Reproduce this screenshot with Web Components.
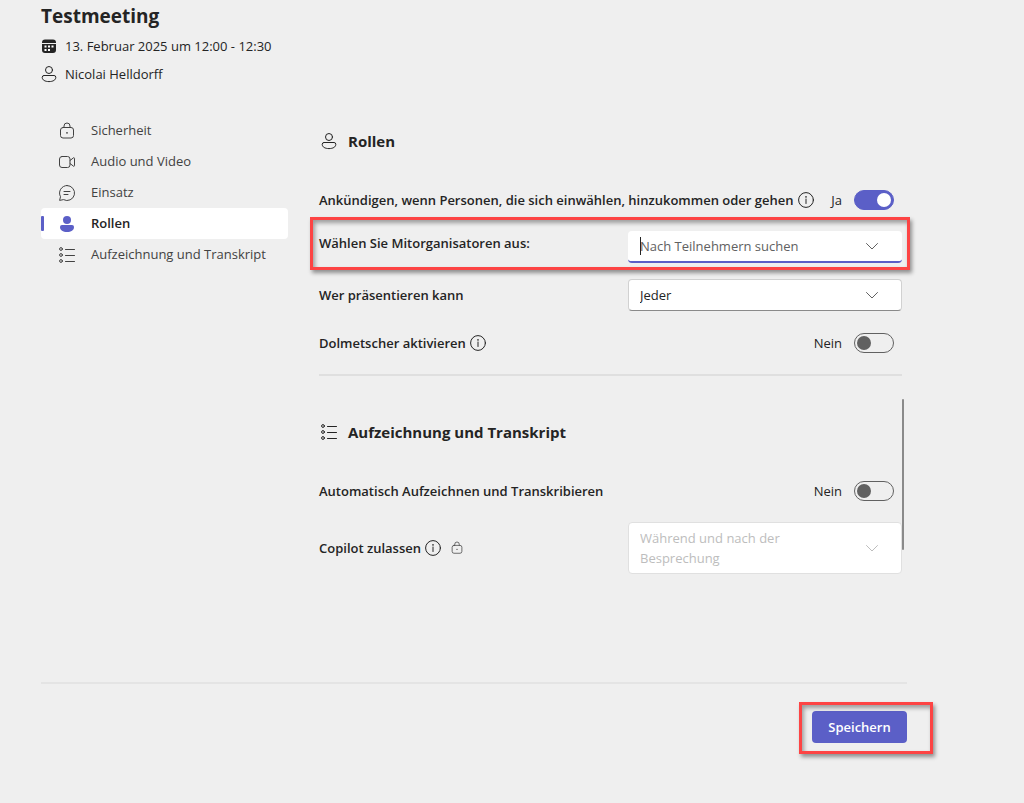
<!DOCTYPE html>
<html lang="de">
<head>
<meta charset="utf-8">
<meta name="viewport" content="width=device-width, initial-scale=1">
<title>Testmeeting – Besprechungsoptionen</title>
<style>
  body {
    margin: 0;
    background: #efefef;
    color: #242424;
    font: 13px/20px "Open Sans", "Noto Sans", sans-serif;
  }
</style>
</head>
<body>
<meeting-options></meeting-options>

<script>
const ICONS = {
  calendar: '<path fill="currentColor" d="M1 4.5A3 3 0 0 1 4 1.5h8a3 3 0 0 1 3 3V5H1zM1 6h14v6a3 3 0 0 1-3 3H4a3 3 0 0 1-3-3z"/><g fill="#fff"><rect x="7" y="7.500" width="2" height="2"/><rect x="10.500" y="7.500" width="2" height="2"/><rect x="3.500" y="11" width="2" height="2"/><rect x="7" y="11" width="2" height="2"/><rect x="3.500" y="7.500" width="2" height="2"/></g>',
  person: '<circle cx="8" cy="4" r="3.500"/><path d="M3 9.500h10a1.800 1.800 0 0 1 1.800 1.800C14.800 14 12 15.600 8 15.600S1.200 14 1.200 11.300A1.800 1.800 0 0 1 3 9.500z"/>',
  personFilled: '<g fill="currentColor" stroke="none"><circle cx="8" cy="4" r="4"/><path d="M3 9h10a2 2 0 0 1 2 2c0 3.200-3 5-7 5s-7-1.800-7-5a2 2 0 0 1 2-2z"/></g>',
  lock: '<rect x="1.500" y="4.500" width="13" height="10.500" rx="2.500"/><path d="M5 4.500V3a3 3 0 0 1 6 0v1.500"/><circle cx="8" cy="9.800" r=".9" fill="currentColor" stroke="none"/>',
  video: '<rect x=".5" y="2.500" width="10.500" height="11" rx="2.500"/><path d="M11 6.500l3.500-2.700c.4-.3 1 0 1 .5v7.400c0 .5-.6.8-1 .5L11 9.500"/>',
  chat: '<path d="M8 .5a7.500 7.500 0 1 1-3.500 14.100L.6 15.400l.9-3.700A7.500 7.500 0 0 1 8 .5zM5 6.500h6M5 9.500h4"/>',
  list: '<circle cx="2" cy="2" r="1.400"/><circle cx="2" cy="8" r="1.400"/><circle cx="2" cy="14" r="1.400"/><path d="M6.500 2.500h9M6.500 8.500h9M6.500 14.500h9"/>',
  info: '<circle cx="8" cy="8" r="7.400"/><path d="M8 7v4.500"/><circle cx="8" cy="4.900" r=".8" fill="currentColor" stroke="none"/>',
  chevron: '<path d="M2.500 5.500L8 11l5.500-5.500"/>'
};

function define(name, render) {
  customElements.define(name, class extends HTMLElement {
    connectedCallback() {
      if (this.shadowRoot) return;
      const template = document.createElement('template');
      template.innerHTML = render(this);
      this.attachShadow({ mode: 'open' }).append(template.content.cloneNode(true));
    }
  });
}

/* Label column shared by all kinds of setting */
const settingStyle = `
  :host { display: flex; align-items: center; gap: 12px; min-height: 31px; }
  .caption { flex: 1; display: flex; align-items: center; gap: 4px; }
  .caption ui-icon[name=lock] { --size: 12px; margin-left: 6px; color: #424242; }
  label { font-weight: 600; line-height: 24px; }
`;
const caption = el => `
  <div class="caption">
    <label for="control">${el.getAttribute('label')}</label>
    ${el.hasAttribute('info') ? '<ui-icon name="info"></ui-icon>' : ''}
    ${el.hasAttribute('locked') ? '<ui-icon name="lock"></ui-icon>' : ''}
  </div>`;

define('ui-icon', el => `
  <style>
    :host { display: block; flex: none; width: var(--size, 16px); height: var(--size, 16px); }
    svg { display: block; width: 100%; height: 100%; overflow: visible; }
  </style>
  <svg viewBox="0 0 16 16" fill="none" stroke="${el.getAttribute('name') === 'calendar' ? 'none' : 'currentColor'}" stroke-linecap="round" stroke-linejoin="round" aria-hidden="true">${ICONS[el.getAttribute('name')]}</svg>`);

define('marked-area', () => `
  <style>
    :host { display: block; position: relative; }
    :host::after {
      content: ""; position: absolute; inset: var(--reach); pointer-events: none;
      border: 3px solid #fd4444;
      box-shadow: 2px 3px 4px rgba(0,0,0,.4), inset 2px 3px 4px rgba(0,0,0,.35);
    }
  </style>
  <slot></slot>`);

define('meeting-header', () => `
  <style>
    :host { display: block; }
    h1 { margin: 0; font-size: 19px; line-height: 32px; font-weight: 700; }
    ul { list-style: none; margin: 0; padding: 0; }
    li { display: flex; align-items: center; gap: 8px; line-height: 28px; }
  </style>
  <h1><slot></slot></h1>
  <ul>
    <li><ui-icon name="calendar"></ui-icon>13. Februar 2025 um 12:00 - 12:30</li>
    <li><ui-icon name="person"></ui-icon>Nicolai Helldorff</li>
  </ul>`);

define('nav-item', el => `
  <style>
    :host { display: block; color: #424242; }
    a {
      position: relative; display: flex; align-items: center; gap: 16px;
      padding-left: 18px; line-height: 31px; color: inherit; text-decoration: none;
      border-radius: 4px;
    }
    a[aria-current] { background: #fff; color: #242424; font-weight: 600; }
    a[aria-current]::before {
      content: ""; position: absolute; left: 0; top: 8px; bottom: 8px; width: 3px;
      background: #5b5fc7; border-radius: 1px;
    }
    a[aria-current] ui-icon { color: #5b5fc7; }
  </style>
  <a href="#" ${el.hasAttribute('current') ? 'aria-current="page"' : ''}><ui-icon name="${el.getAttribute('icon')}"></ui-icon><slot></slot></a>`);

define('settings-section', el => `
  <style>
    :host { display: block; position: relative; }
    h2 {
      display: flex; align-items: center; gap: 11px; margin: 0 0 27px; padding-left: 2px;
      font-size: 15px; line-height: 32px; font-weight: 700;
    }
    .rows { display: flex; flex-direction: column; gap: 16px; }
    :host([scrollable])::after {
      content: ""; position: absolute; right: -2px; top: -17px; bottom: 24px; width: 2px;
      background: #8a8a8a; border-radius: 1px;
    }
  </style>
  <h2><ui-icon name="${el.getAttribute('icon')}"></ui-icon>${el.getAttribute('heading')}</h2>
  <div class="rows"><slot></slot></div>`);

define('toggle-setting', el => `
  <style>
    ${settingStyle}
    :host { padding-right: 8px; }
    input {
      appearance: none; box-sizing: border-box; flex: none; display: flex; align-items: center;
      width: 40px; height: 20px; margin: 0; padding: 0 2px;
      border: 1px solid #616161; border-radius: 10px;
    }
    input::before { content: ""; width: 14px; height: 14px; border-radius: 50%; background: #616161; }
    input:checked { background: #5b5fc7; border-color: #5b5fc7; justify-content: flex-end; }
    input:checked::before { background: #fff; }
  </style>
  ${caption(el)}
  <span>${el.hasAttribute('on') ? 'Ja' : 'Nein'}</span>
  <input id="control" type="checkbox" role="switch" ${el.hasAttribute('on') ? 'checked' : ''}>`);

define('select-setting', el => `
  <style>
    ${settingStyle}
    .field { position: relative; flex: 0 0 47%; display: flex; align-items: center; }
    select {
      appearance: none; box-sizing: border-box; width: 100%; min-height: 31px; margin: 0;
      padding: 5px 110px 5px 11px; color: inherit; font: inherit; white-space: normal;
      background: #fff; border: 1px solid #d1d1d1; border-bottom-color: #8a8a8a; border-radius: 4px;
    }
    select:disabled { color: #bdbdbd; opacity: 1; border-color: #e0e0e0; }
    .field ui-icon { position: absolute; right: 22px; color: #616161; pointer-events: none; }
    .field select:disabled + ui-icon { color: #bdbdbd; }
  </style>
  ${caption(el)}
  <div class="field">
    <select id="control" ${el.hasAttribute('locked') ? 'disabled' : ''}><option>${el.getAttribute('value')}</option></select>
    <ui-icon name="chevron"></ui-icon>
  </div>`);

define('people-setting', el => `
  <style>
    ${settingStyle}
    :host { align-items: flex-start; }
    .field {
      position: relative; box-sizing: border-box; flex: 0 0 47%; display: flex; align-items: center;
      height: 32px; padding: 0 22px 0 12px; background: #fff;
      border-bottom: 2px solid #5b5fc7; border-radius: 4px;
    }
    .field::before { content: ""; position: absolute; left: 12px; top: 6px; width: 1px; height: 18px; background: #242424; }
    input { flex: 1; min-width: 0; padding: 0; border: 0; outline: 0; background: none; font: inherit; color: inherit; }
    input::placeholder { color: #616161; opacity: 1; }
    button { padding: 0; border: 0; background: none; color: #616161; }
  </style>
  ${caption(el)}
  <div class="field">
    <input id="control" type="text" role="combobox" aria-expanded="false" placeholder="${el.getAttribute('placeholder')}">
    <button type="button" aria-label="Liste öffnen"><ui-icon name="chevron"></ui-icon></button>
  </div>`);

define('save-button', () => `
  <style>
    :host { display: block; }
    button {
      display: block; min-width: 95px; margin: 0; padding: 0 16px; border: 0; border-radius: 4px;
      background: #5b5fc7; color: #fff; font: inherit; font-weight: 600; line-height: 32px;
    }
  </style>
  <button type="submit"><slot></slot></button>`);

define('meeting-options', () => `
  <style>
    :host { display: block; padding: 0 117px 50px 41px; }
    .columns { display: grid; grid-template-columns: 247px minmax(0, 1fr); gap: 31px; margin-top: 27px; }
    main { padding: 10px 5px 0 0; }
    hr { height: 2px; margin: 16px 0 40px; border: 0; background: #dfdfdf; }
    footer { display: flex; justify-content: flex-end; margin-top: 108px; padding-top: 27px; border-top: 2px solid #e4e4e4; }
    .row-mark { --reach: -14px -8px -7px -9px; }
    .save-mark { --reach: -9px -26px -11px -13px; }
  </style>
  <meeting-header>Testmeeting</meeting-header>
  <div class="columns">
    <nav aria-label="Besprechungsoptionen">
      <nav-item icon="lock">Sicherheit</nav-item>
      <nav-item icon="video">Audio und Video</nav-item>
      <nav-item icon="chat">Einsatz</nav-item>
      <nav-item icon="personFilled" current>Rollen</nav-item>
      <nav-item icon="list">Aufzeichnung und Transkript</nav-item>
    </nav>
    <main>
      <settings-section icon="person" heading="Rollen">
        <toggle-setting label="Ankündigen, wenn Personen, die sich einwählen, hinzukommen oder gehen" info on></toggle-setting>
        <marked-area class="row-mark">
          <people-setting label="Wählen Sie Mitorganisatoren aus:" placeholder="Nach Teilnehmern suchen"></people-setting>
        </marked-area>
        <select-setting label="Wer präsentieren kann" value="Jeder"></select-setting>
        <toggle-setting label="Dolmetscher aktivieren" info></toggle-setting>
      </settings-section>
      <hr>
      <settings-section icon="list" heading="Aufzeichnung und Transkript" scrollable>
        <toggle-setting label="Automatisch Aufzeichnen und Transkribieren"></toggle-setting>
        <select-setting label="Copilot zulassen" value="Während und nach der Besprechung" info locked></select-setting>
      </settings-section>
    </main>
  </div>
  <footer>
    <marked-area class="save-mark"><save-button>Speichern</save-button></marked-area>
  </footer>`);
</script>
</body>
</html>
